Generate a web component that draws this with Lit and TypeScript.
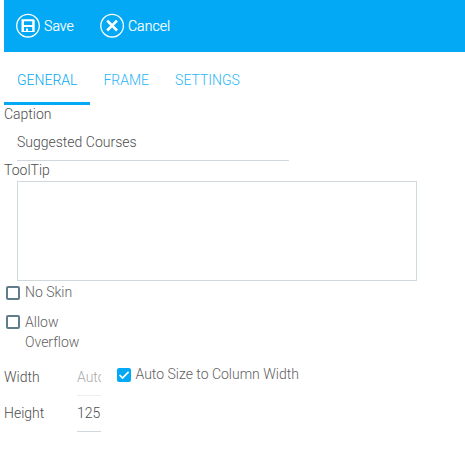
import { LitElement, html, css, svg } from "lit";
import { customElement, property, state } from "lit/decorators.js";
import { classMap } from "lit/directives/class-map.js";

@customElement("check-box")
class CheckBox extends LitElement {
  @property() label = "";
  @property({ type: Boolean }) checked = false;

  static styles = css`
    :host { display: flex; align-items: flex-start; line-height: 20px; color: #616161; font-variant-ligatures: none; }
    .box { flex: none; box-sizing: border-box; width: 14px; height: 14px; margin: 3.9px 5px 0 0; border: 2px solid #607d8b; border-radius: 2px; }
    .box.on { border: 0; background: #03a9f4; }
    svg { display: block; }
  `;

  render() {
    return html`
      <span class=${classMap({ box: true, on: this.checked })} @click=${() => (this.checked = !this.checked)}>
        ${this.checked
          ? html`<svg width="14" height="14" viewBox="0 0 14 14"><path d="M2.6 7 5.5 10 11.6 3.8" fill="none" stroke="#fff" stroke-width="1.7" /></svg>`
          : ""}
      </span>
      <span>${this.label}</span>
    `;
  }
}

const saveGlyph = svg`
  <path fill="#fff" fill-rule="evenodd" d="M5.5 6.3H17.8L18.7 7.2V19H5.5ZM8 8.2V12H16.2V8.2ZM8 14V18H10V15.6H12V18H16.2V14Z" />`;
const cancelGlyph = svg`
  <path d="M7.2 7.7 17 17.5M17 7.7 7.2 17.5" fill="none" stroke="#fff" stroke-width="2.6" />`;

@customElement("app-root")
class AppRoot extends LitElement {
  @state() private tab = "GENERAL";

  static styles = css`
    :host { display: block; height: 451px; padding-left: 4px; box-sizing: border-box; overflow: hidden; background: #fff; color: #4d4d4d; font: 300 14px/20px Roboto, sans-serif; }
    .toolbar { display: flex; gap: 26px; box-sizing: border-box; height: 52px; padding: 13px 12px; background: #03a9f4; color: #fff; }
    .action { display: flex; align-items: center; height: 25px; gap: 3px; }
    .action span { letter-spacing: 0.08px; -webkit-text-stroke: 0.2px #fff; }
    .tabs { display: flex; height: 53px; }
    .tab { box-sizing: border-box; padding: 18px 13px 0; color: #29b6f6; }
    .tab.active { border-bottom: 3px solid #03a9f4; color: #03a9f4; }
    .label { height: 20px; line-height: 19px; }
    .caption { box-sizing: border-box; width: 272px; height: 36px; margin-left: 13px; padding-top: 7px; border-bottom: 1px solid #cfd8dc; }
    .area { box-sizing: border-box; width: 400px; height: 100px; margin-left: 13px; border: 1px solid #cfd8dc; }
    .checks { display: flex; flex-direction: column; gap: 9.5px; width: 80px; margin: 1px 0 0 2px; }
    .sizes { display: grid; grid-template-columns: 73px 24px 1fr; margin-top: 8.5px; }
    .sizes > .name { padding-top: 7px; height: 29px; }
    .size { box-sizing: border-box; height: 36px; padding-top: 7px; overflow: hidden; white-space: nowrap; border-bottom: 1px solid #cfd8dc; }
    .size.off { border-color: #eee; color: #aaa; }
    .auto { margin: 4px 0 0 15.5px; }
  `;

  render() {
    return html`
      <div class="toolbar">
        <div class="action">
          <svg width="25" height="25" viewBox="0 0 25 25"><circle cx="12" cy="12.7" r="11.3" fill="none" stroke="#fff" stroke-width="1.3" />${saveGlyph}</svg>
          <span>Save</span>
        </div>
        <div class="action">
          <svg width="25" height="25" viewBox="0 0 25 25"><circle cx="12.1" cy="12.7" r="11.3" fill="none" stroke="#fff" stroke-width="1.3" />${cancelGlyph}</svg>
          <span>Cancel</span>
        </div>
      </div>
      <div class="tabs">
        ${["GENERAL", "FRAME", "SETTINGS"].map(
          (t) => html`<div class=${classMap({ tab: true, active: t === this.tab })} @click=${() => (this.tab = t)}>${t}</div>`
        )}
      </div>
      <div class="label">Caption</div>
      <div class="caption">Suggested Courses</div>
      <div class="label">ToolTip</div>
      <div class="area"></div>
      <div class="checks">
        <check-box label="No Skin"></check-box>
        <check-box label="Allow Overflow"></check-box>
      </div>
      <div class="sizes">
        <div class="name">Width</div>
        <div class="size off">Auto</div>
        <check-box class="auto" label="Auto Size to Column Width" checked></check-box>
        <div class="name">Height</div>
        <div class="size">125</div>
      </div>
    `;
  }
}
